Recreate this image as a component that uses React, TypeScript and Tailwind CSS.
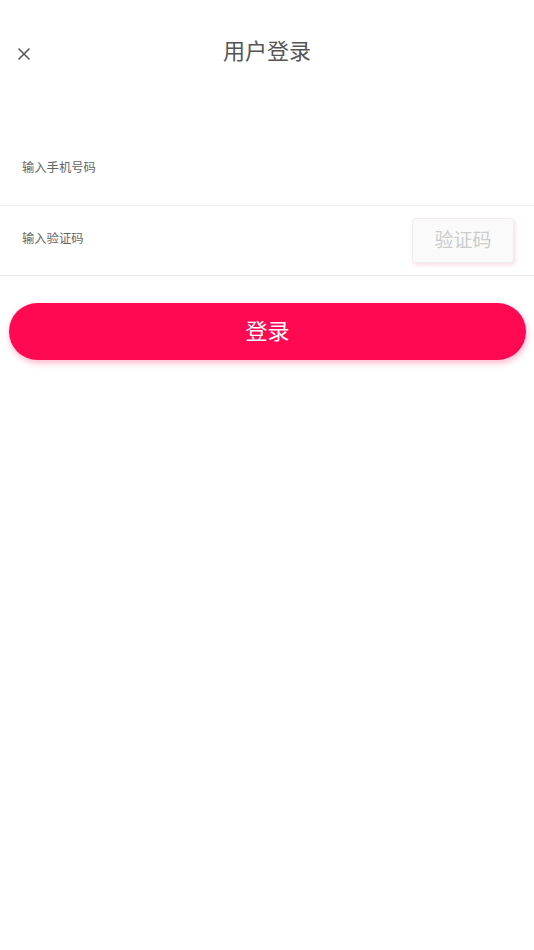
import { useState } from "react";

const font = "font-['Noto_Sans_CJK_SC','Noto_Sans',sans-serif]";

const App = () => {
  const [phone, setPhone] = useState("");
  const [code, setCode] = useState("");

  return (
    <div className={`w-[534px] min-h-[950px] bg-white ${font}`}>
      <div className="relative h-[104px] flex justify-center pt-[34px]">
        <button className="absolute left-[16px] top-[46px] w-[15px] h-[15px] flex items-center justify-center">
          <svg width="14" height="14" viewBox="0 0 14 14">
            <path d="M2 2 L12 12 M12 2 L2 12" stroke="#555" strokeWidth="1.6" strokeLinecap="round" />
          </svg>
        </button>
        <h1 className="text-[22px] leading-[30px] text-[#555]">用户登录</h1>
      </div>

      <div className="mt-[30px]">
        <div className="h-[72px] flex items-center px-[22px] border-b border-[#f0f0f0]">
          <input
            value={phone}
            onChange={(e) => setPhone(e.target.value)}
            placeholder="输入手机号码"
            className="w-full mb-[4px] outline-none text-[12.3px] text-[#333] placeholder:text-[#666]"
          />
        </div>
        <div className="h-[70px] flex items-center pl-[22px] pr-[20px] border-b border-[#e8e8e8]">
          <input
            value={code}
            onChange={(e) => setCode(e.target.value)}
            placeholder="输入验证码"
            className="flex-1 mb-[4px] outline-none text-[12.3px] text-[#333] placeholder:text-[#666]"
          />
          <button className="w-[102px] h-[45px] pb-[2px] rounded-[4px] bg-[#fafafa] border border-[#eeeeee] shadow-[1px_2px_4px_rgba(255,10,82,0.15)] text-[19px] text-[#cccccc]">
            验证码
          </button>
        </div>
      </div>

      <div className="px-[9px] pr-[8px] mt-[27px]">
        <button className="w-full h-[57px] pb-[4px] rounded-full bg-[#ff0a52] text-white text-[22px] shadow-[1px_3px_6px_rgba(255,10,82,0.3)]">
          登录
        </button>
      </div>
    </div>
  );
};

export default App;
